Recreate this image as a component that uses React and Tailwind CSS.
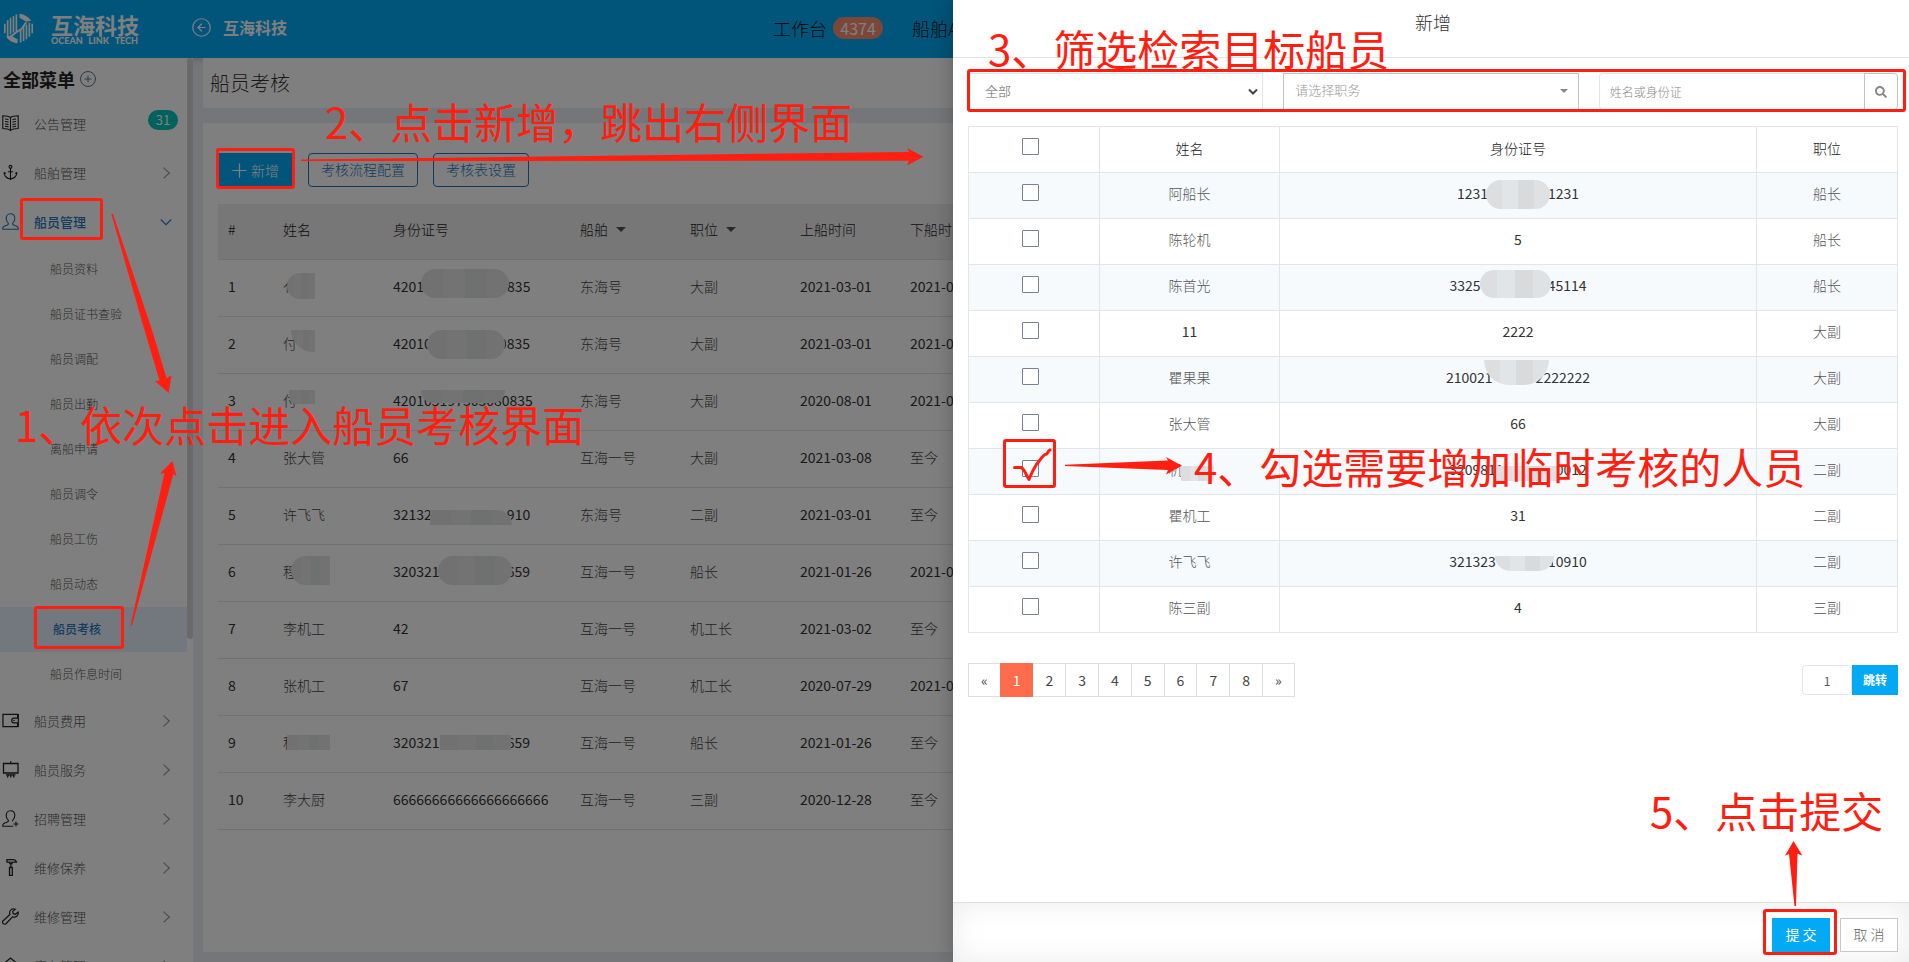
import { Fragment } from "react";
import { Anchor, CircleArrowLeft, CirclePlus, Plus } from "lucide-react";
import { FaSearch } from "react-icons/fa";

const SIDE_ITEMS = [
  { label: "公告管理", icon: "book", badge: "31" },
  { label: "船舶管理", icon: "anchor" },
  { label: "船员管理", icon: "user", open: true },
  { label: "船员费用", icon: "wallet" },
  { label: "船员服务", icon: "board" },
  { label: "招聘管理", icon: "userPlus" },
  { label: "维修保养", icon: "hammer" },
  { label: "维修管理", icon: "wrench" },
  { label: "库存管理", icon: "home" },
];

const SUB_ITEMS = [
  "船员资料",
  "船员证书查验",
  "船员调配",
  "船员出勤",
  "离船申请",
  "船员调令",
  "船员工伤",
  "船员动态",
  "船员考核",
  "船员作息时间",
];

// A value is either plain text or { before, gap, after, mask } where the middle is pixelated.
const ROWS = [
  [
    { before: "亻", mask: "left-[4px] top-[-4px] w-[28px] h-[26px] rounded-l-full" },
    { before: "4201", gap: "w-[83px]", after: "835", mask: "left-[28px] top-[-8px] w-[88px] h-[29px] rounded-full" },
    "东海号", "大副", "2021-03-01", "2021-03-31",
  ],
  [
    { before: "付", mask: "left-[8px] top-[-4px] w-[24px] h-[22px] rounded-bl-full" },
    { before: "42010", gap: "w-[67px]", after: "0835", mask: "left-[34px] top-[-4px] w-[78px] h-[29px] rounded-full" },
    "东海号", "大副", "2021-03-01", "2021-03-31",
  ],
  [
    { before: "付", mask: "left-[6px] top-[-1px] w-[26px] h-[14px] rounded-bl-lg" },
    { before: "420105197303080835", mask: "left-[28px] top-[-1px] w-[84px] h-[13px] rounded-b-xl" },
    "东海号", "大副", "2020-08-01", "2021-03-31",
  ],
  ["张大管", "66", "互海一号", "大副", "2021-03-08", "至今"],
  [
    "许飞飞",
    { before: "32132", gap: "w-[75px]", after: "910", mask: "left-[37px] top-[5px] w-[82px] h-[15px] rounded-tr-full" },
    "东海号", "二副", "2021-03-01", "至今",
  ],
  [
    { before: "程", mask: "left-[8px] top-[-6px] w-[39px] h-[29px] rounded-l-full" },
    { before: "320321", gap: "w-[67px]", after: "659", mask: "left-[45px] top-[-6px] w-[74px] h-[29px] rounded-full" },
    "互海一号", "船长", "2021-01-26", "2021-03-31",
  ],
  ["李机工", "42", "互海一号", "机工长", "2021-03-02", "至今"],
  ["张机工", "67", "互海一号", "机工长", "2020-07-29", "2021-03-31"],
  [
    { before: "程", mask: "left-[4px] top-[2px] w-[43px] h-[15px]" },
    { before: "320321", gap: "w-[67px]", after: "659", mask: "left-[47px] top-[2px] w-[71px] h-[15px]" },
    "互海一号", "船长", "2021-01-26", "至今",
  ],
  ["李大厨", "66666666666666666666", "互海一号", "三副", "2020-12-28", "至今"],
];

const CANDIDATES = [
  ["阿船长", { before: "1231", gap: "w-[60px]", after: "1231", mask: "left-[29px] top-[-4px] w-[64px] h-[29px] rounded-full" }, "船长"],
  ["陈轮机", "5", "船长"],
  ["陈首光", { before: "3325", gap: "w-[67px]", after: "45114", mask: "left-[30px] top-[-6px] w-[71px] h-[28px] rounded-full" }, "船长"],
  ["11", "2222", "大副"],
  ["瞿果果", { before: "210021", gap: "w-[43px]", after: "2222222", mask: "left-[38px] top-[-8px] w-[65px] h-[25px] rounded-b-full" }, "大副"],
  ["张大管", "66", "大副"],
  [
    { before: "机", gap: "w-[28px]", after: "", mask: "left-[13px] top-[6px] w-[33px] h-[15px]" },
    { before: "3209811", gap: "w-[52px]", after: "0012", mask: "left-[48px] top-[6px] w-[60px] h-[15px]" },
    "二副",
  ],
  ["瞿机工", "31", "二副"],
  ["许飞飞", { before: "321323", gap: "w-[52px]", after: "10910", mask: "left-[46px] top-[4px] w-[59px] h-[15px] rounded-b-full" }, "二副"],
  ["陈三副", "4", "三副"],
];

const DIGITS = "font-normal text-[#333]";

function Masked({ value, tone }) {
  if (typeof value === "string") {
    return <span className={/^[\d-]+$/.test(value) ? DIGITS : ""}>{value}</span>;
  }
  const ascii = /^\d/.test(value.before);
  return (
    <span className={"relative inline-flex align-top leading-5 " + (ascii ? DIGITS : "")}>
      {value.before}
      {value.gap && <span className={value.gap} />}
      {value.after}
      <span className={"absolute mt-px flex overflow-hidden " + value.mask}>
        {tone.map((shade, i) => (
          <span key={i} className={"flex-1 " + shade} />
        ))}
      </span>
    </span>
  );
}

function SideIcon({ name }) {
  const common = {
    viewBox: "0 0 17 17",
    className: "size-[17px] shrink-0",
    fill: "none",
    stroke: "currentColor",
    strokeWidth: 1.1,
    "aria-hidden": true,
  };
  switch (name) {
    case "book":
      return (
        <svg {...common}>
          <path d="M8.5 2.5C6.500 1 3 .8.8.8V13.500c3 0 5.700.300 7.700 2 2-1.700 4.700-2 7.700-2V.8C14 .8 10.500 1 8.500 2.500ZM8.500 2.500v13M3 4c1.300 0 2.500.200 3.500.700M3 6.500c1.300 0 2.500.200 3.500.700M3 9c1.300 0 2.500.200 3.500.700M3 11.300c1.300 0 2.500.200 3.500.700M14 4c-1.300 0-2.500.200-3.500.700M14 6.500c-1.300 0-2.500.200-3.500.700M14 9c-1.300 0-2.500.200-3.500.700M14 11.300c-1.300 0-2.500.200-3.500.700" />
        </svg>
      );
    case "anchor":
      return <Anchor className="size-[17px] shrink-0" strokeWidth={1.6} aria-hidden />;
    case "user":
      return (
        <svg {...common}>
          <path d="M8.500.700c-2.700 0-4.300 2-4.300 4.800 0 2 .8 3.500 2 4.600.500.500.3 1.300-.4 1.600L1.800 13.500C.9 14 .7 14.800.7 16.300h15.600c0-1.500-.2-2.300-1.100-2.800l-4-1.800c-.7-.3-.9-1.100-.4-1.600 1.200-1.100 2-2.600 2-4.600C12.800 2.700 11.200.700 8.500.700Z" />
        </svg>
      );
    case "userPlus":
      return (
        <svg {...common}>
          <path d="M8.500.700c-2.700 0-4.300 2-4.300 4.800 0 2 .8 3.500 2 4.600.500.500.3 1.300-.4 1.600L1.800 13.500C.9 14 .7 14.800.7 16.300h10.500M8.500.700c2.700 0 4.300 2 4.300 4.800 0 2-.8 3.500-2 4.600-.3.400-.2.900.2 1.200M14 11.500v5M11.500 14h5" />
        </svg>
      );
    case "wallet":
      return (
        <svg {...common} viewBox="0 0 18 17" strokeWidth={1.300}>
          <path d="M16.500 6V2H1v13h15.500v-4M17.300 6h-4.500a2.500 2.500 0 0 0 0 5h4.500ZM12 8.500h1.500M17.300 1.500V6M17.300 11v4.500" />
        </svg>
      );
    case "board":
      return (
        <svg {...common} strokeWidth={1.300}>
          <path d="M1.500 2.500h14.500v9.500h-14.500ZM8.700.300v2.200M4 13.800h9.500M6.500 13.800 5.300 16.500M8.700 13.800v2.700M11 13.800l1.200 2.700" />
        </svg>
      );
    case "hammer":
      return (
        <svg {...common} strokeWidth={1.300}>
          <path d="M5 .7h6.500c1.500 0 2.500 1 3 2.500h-3.500H10v1.300H7.800V3.200H5ZM8.900 4.500v4M7.500 8.500h2.800v7.800H7.500Z" />
        </svg>
      );
    case "wrench":
      return (
        <svg {...common} strokeWidth={1.200}>
          <path d="M13.300 1.200C11.500.500 9.300 1 8.300 2.500c-.9 1.300-.8 2.700-.4 4L1.200 12.700c-1 1-.7 2.300 0 3s2 .8 3-.2l6.300-6.600c1.300.5 3 .4 4.200-.6 1.300-1.100 1.900-2.700 1.400-4.300l-2.600 2.300-2.300-.6-.5-2.300Z" />
        </svg>
      );
    default:
      return (
        <svg {...common} strokeWidth={1.300}>
          <path d="M.8 7.500 8.500 1l7.700 6.500M3 6v10h11V6" />
        </svg>
      );
  }
}

function Chevron({ open }) {
  return (
    <svg viewBox="0 0 12 12" className="size-3 shrink-0" fill="none" stroke="currentColor" strokeWidth="1.200" aria-hidden>
      <path d={open ? "M.8 3.500 6 8.700l5.200-5.200" : "M3.500.6 9.300 6 3.500 11.400"} />
    </svg>
  );
}

function Logo() {
  return (
    <svg viewBox="0 0 32 32" className="size-[31px] shrink-0" aria-hidden>
      <g fill="none" stroke="#fff" strokeWidth="1.700">
        <path d="M1.800 21V11M4.800 24.500V7.500M7.800 22V4.800M10.800 20V3M13.800 18.500V1.500" />
        <path d="M30.200 11v10M27.200 10v14.500M24.200 12v15.200M21.200 14v15M18.200 17v13.500" />
        <path d="M8 24.500 13.500 20 19 16.500 24 9.500" strokeWidth="2" />
      </g>
      <path d="M17 .8c5 .500 9.500 3 12 7.200l-5 1-7-4Z" fill="#fff" />
      <path d="M15 31.200c-5-.500-9.500-3-11.500-7l4.500-1 7 4Z" fill="#fff" />
    </svg>
  );
}

function Header() {
  return (
    <header className="flex h-[58px] shrink-0 items-center bg-[#03a9f4] text-white shadow-md">
      <div className="flex w-[191px] items-center gap-[17px] pb-0.5 pl-[3px]">
        <Logo />
        <div className="flex w-[87px] flex-col">
          <span className="text-[22px] leading-6 font-bold whitespace-nowrap">互海科技</span>
          <span className="flex justify-between font-[Lato,sans-serif] text-[9px] leading-[9px] font-black">
            <span>OCEAN</span> <span>LINK</span> <span>TECH</span>
          </span>
        </div>
      </div>
      <a href="#back" className="flex items-center gap-[11px] pb-1 text-base font-bold">
        <CircleArrowLeft className="size-[21px]" strokeWidth={1.400} aria-hidden />
        互海科技
      </a>
      <nav className="ml-[486px] flex items-center gap-[29px] pb-0.5 text-lg whitespace-nowrap text-[#111]">
        <a href="#workbench" className="flex items-center gap-1.5">
          工作台
          <span className="flex h-[22px] w-[50px] items-center justify-center rounded-full bg-[#f98d72] text-base font-normal text-white">4374</span>
        </a>
        <a href="#ais">船舶AIS</a>
      </nav>
    </header>
  );
}

function Sidebar() {
  return (
    <aside className="flex w-[193px] shrink-0 overflow-hidden bg-white">
      <div className="min-w-0 flex-1">
        <div className="flex h-[42px] items-center gap-1 pl-[3px] text-lg font-bold text-[#222]">
          全部菜单
          <CirclePlus className="size-[18px] text-[#5b7088]" strokeWidth={1.300} aria-hidden />
        </div>
        <nav>
          {SIDE_ITEMS.map((item) => (
            <Fragment key={item.label}>
              <a
                href="#menu"
                className={
                  "flex h-[49px] items-center pr-[15px] pb-0.5 pl-0.5 text-[13px] " +
                  (item.open ? "font-medium text-[#2378bd]" : "text-[#555]")
                }
              >
                <span className={item.open ? "" : "text-[#222]"}>
                  <SideIcon name={item.icon} />
                </span>
                <span className="ml-[15px] flex-1">{item.label}</span>
                {item.badge ? (
                  <span className="-mr-1.5 mb-2 flex h-5 w-[30px] items-center justify-center rounded-full bg-[#00c4b8] text-[13px] font-normal text-white">
                    {item.badge}
                  </span>
                ) : (
                  <span className={item.open ? "" : "text-[#999]"}>
                    <Chevron open={item.open} />
                  </span>
                )}
              </a>
              {item.open &&
                SUB_ITEMS.map((sub) => (
                  <a
                    key={sub}
                    href="#submenu"
                    className={
                      "flex h-[45px] items-center pb-0.5 text-xs " +
                      (sub === "船员考核" ? "bg-[#e6f0ff] pl-[53px] font-medium text-[#2378bd]" : "pl-[50px] text-[#555]")
                    }
                  >
                    {sub}
                  </a>
                ))}
            </Fragment>
          ))}
        </nav>
      </div>
      <div className="h-[581px] w-1.5 rounded-full bg-[#d4d4d4]" />
    </aside>
  );
}

function SortHead({ children }) {
  return (
    <span className="flex items-center gap-2">
      {children}
      <span className="border-x-[5px] border-t-[5px] border-x-transparent border-t-[#555]" />
    </span>
  );
}

const PAGE_TONE = ["bg-[#e2e2e2]", "bg-[#e6e7e8]", "bg-[#dfe0e0]", "bg-[#e4e4e4]"];

function MainPage() {
  return (
    <main className="flex min-w-0 flex-1 flex-col gap-[15px] pr-[15px] pb-2.5 pl-2.5">
      <h1 className="flex h-[50px] shrink-0 items-center bg-white pl-[7px] text-xl text-[#333]">船员考核</h1>
      <section className="flex-1 bg-white px-[15px] pt-[30px]">
        <div className="flex gap-[15px] text-sm">
          <button type="button" className="flex h-[34px] w-[75px] items-center justify-center bg-[#03a9f4] pr-1 text-white">
            <Plus className="size-[23px]" strokeWidth={1.300} aria-hidden />
            新增
          </button>
          <button type="button" className="h-[34px] rounded-sm border border-[#2378bd] px-3 pb-0.5 text-[#2378bd]">考核流程配置</button>
          <button type="button" className="h-[34px] rounded-sm border border-[#2378bd] px-3 pb-0.5 text-[#2378bd]">考核表设置</button>
        </div>
        <table className="mt-[17px] w-full table-fixed text-left text-sm text-[#444] [&_td]:pb-[3px] [&_th]:pb-1">
          <thead>
            <tr className="h-[55px] border-b border-[#e0e0e0] bg-[#eee] text-[#222] [&>th]:px-2.5 [&>th]:font-light">
              <th className="w-[55px]">#</th>
              <th className="w-[110px]">姓名</th>
              <th className="w-[187px]">身份证号</th>
              <th className="w-[110px]"><SortHead>船舶</SortHead></th>
              <th className="w-[110px]"><SortHead>职位</SortHead></th>
              <th className="w-[110px]">上船时间</th>
              <th>下船时间</th>
            </tr>
          </thead>
          <tbody>
            {ROWS.map((row, i) => (
              <tr key={i} className="h-[57px] border-b border-[#e4e4e4] [&>td]:px-2.5">
                <td className={DIGITS}>{i + 1}</td>
                {row.map((cell, j) => (
                  <td key={j}>
                    <Masked value={cell} tone={PAGE_TONE} />
                  </td>
                ))}
              </tr>
            ))}
          </tbody>
        </table>
      </section>
    </main>
  );
}

function Filters() {
  return (
    <div className="grid h-[37px] grid-cols-[295fr_295fr_299fr] gap-5 text-[13px]">
      <div className="relative">
        <select aria-label="船舶" className="h-full w-full appearance-none border border-[#e4e7ea] bg-white pb-0.5 pl-4 text-[#666]">
          <option>全部</option>
        </select>
        <svg viewBox="0 0 10 6" className="pointer-events-none absolute top-4 right-[5px] h-1.5 w-2.5" fill="none" stroke="#444" strokeWidth="2" aria-hidden>
          <path d="M1 .5 5 4.500 9 .5" />
        </svg>
      </div>
      <div className="relative">
        <select aria-label="职务" className="h-full w-full appearance-none border border-[#c0c4c8] bg-white pb-1 pl-[11px] text-[#999]">
          <option>请选择职务</option>
        </select>
        <span className="pointer-events-none absolute top-4 right-[11px] border-x-4 border-t-4 border-x-transparent border-t-[#888]" />
      </div>
      <div className="flex">
        <input
          type="text"
          aria-label="姓名或身份证"
          placeholder="姓名或身份证"
          className="min-w-0 flex-1 rounded-l-sm border border-r-0 border-[#e4e7ea] pl-2.5 text-xs placeholder:text-[#888]"
        />
        <button type="button" aria-label="搜索" className="flex w-[34px] items-center justify-center rounded-r-sm border border-[#c0c4c8] text-[#888]">
          <FaSearch className="size-3" aria-hidden />
        </button>
      </div>
    </div>
  );
}

const CHECKBOX = "mr-[7px] block size-[17px] appearance-none rounded-[1px] border border-[#768293] bg-white";
const DRAWER_TONE = ["bg-[#dcdee0]", "bg-[#e2e5e7]", "bg-[#d8dadb]", "bg-[#dfe2e4]"];

function Drawer() {
  return (
    <aside className="absolute inset-y-0 right-0 flex w-[50.08%] flex-col bg-white shadow-[0_0_20px_rgba(0,0,0,0.25)]">
      <h2 className="flex h-[58px] shrink-0 items-center justify-center border-b border-[#e5e5e5] pb-3.5 pl-1 text-lg text-[#333]">新增</h2>
      <div className="flex-1 pt-[15px] pr-[11px] pl-[15px]">
        <Filters />
        <table className="mt-4 w-full table-fixed border-collapse text-center text-sm text-[#555] [&_td]:border [&_td]:border-[#e1e6eb] [&_td]:pb-1.5 [&_th]:border [&_th]:border-[#e1e6eb] [&_th]:pb-1 [&_th]:font-light">
          <thead>
            <tr className="h-[46px] text-[#222]">
              <th className="w-[131px]">
                <label className="flex justify-center pb-[3px]">
                  <input type="checkbox" aria-label="全选" className={CHECKBOX} />
                </label>
              </th>
              <th className="w-[180px]">姓名</th>
              <th>身份证号</th>
              <th className="w-[141px]">职位</th>
            </tr>
          </thead>
          <tbody>
            {CANDIDATES.map((row, i) => (
              <tr key={i} className="h-[46px] odd:bg-[#f6fafd]">
                <td>
                  <label className="flex justify-center pb-px">
                    <input type="checkbox" aria-label={"选择第" + (i + 1) + "行"} className={CHECKBOX} />
                  </label>
                </td>
                {row.map((cell, j) => (
                  <td key={j}>
                    <Masked value={cell} tone={DRAWER_TONE} />
                  </td>
                ))}
              </tr>
            ))}
          </tbody>
        </table>
        <div className="mt-[30px] flex items-center justify-between">
          <nav aria-label="分页" className="flex pl-px text-sm font-normal">
            {["«", "1", "2", "3", "4", "5", "6", "7", "8", "»"].map((p) => (
              <a
                key={p}
                href="#page"
                className={
                  "-ml-px flex h-[34px] items-center border px-3 pb-px " +
                  (p === "1" ? "z-10 border-[#ff6c4c] bg-[#ff6c4c] text-white" : "border-[#ddd] text-[#444]")
                }
              >
                {p}
              </a>
            ))}
          </nav>
          <div className="flex text-xs">
            <input
              type="text"
              aria-label="页码"
              defaultValue="1"
              className="h-[30px] w-[50px] rounded-sm border border-[#e1e6eb] text-center font-normal text-[#555]"
            />
            <button type="button" className="h-[30px] w-[46px] bg-[#03a9f4] font-bold text-white">跳转</button>
          </div>
        </div>
      </div>
      <footer className="flex h-[60px] shrink-0 items-start justify-end gap-2.5 border-t border-[#e0e0e0] pt-[15px] pr-[11px] text-sm shadow-[inset_0_0_30px_rgba(0,0,0,0.08)]">
        <button type="button" className="h-[34px] w-[58px] bg-[#03a9f4] pb-0.5 font-normal text-white">提 交</button>
        <button type="button" className="h-[34px] w-[58px] border border-[#c5c9cd] bg-white pb-0.5 text-[#666]">取 消</button>
      </footer>
    </aside>
  );
}

const NOTE = "absolute text-[42px] leading-[42px] font-normal whitespace-nowrap";

function Annotations() {
  return (
    <div className="pointer-events-none absolute inset-0 overflow-hidden text-[#ff1e10]">
      <p className={NOTE + " top-[403px] left-[15px]"}>1、依次点击进入船员考核界面</p>
      <p className={NOTE + " top-[100px] left-[325px]"}>2、点击新增，跳出右侧界面</p>
      <p className={NOTE + " top-[27px] left-[988px]"}>3、筛选检索目标船员</p>
      <p className={NOTE + " top-[445px] left-[1194px]"}>4、勾选需要增加临时考核的人员</p>
      <p className={NOTE + " top-[789px] left-[1650px]"}>5、点击提交</p>
      <svg className="absolute inset-0 size-full" aria-hidden>
        <g fill="none" stroke="currentColor" strokeWidth="3">
          <rect x="21.500" y="199.500" width="80" height="39" rx="1.500" />
          <rect x="217.500" y="149.500" width="76" height="38" rx="1.500" />
          <rect x="35.500" y="607.500" width="87" height="40" rx="1.500" />
          <rect x="968.500" y="70.500" width="936" height="40" rx="1.500" />
          <rect x="1004.500" y="440.500" width="50" height="46" rx="1.500" />
          <rect x="1764.500" y="910.500" width="71" height="43" rx="1.500" />
          <path d="M1014.500 467.500H1021.500C1025 470 1026 475 1029 479.500 1031 474 1033.500 469 1037 463.500 1040 461 1042 456 1045 454.500 1048.500 454.500 1047 451 1050 450" strokeLinecap="round" strokeLinejoin="round" />
        </g>
        <g fill="currentColor">
          <path d="M111.300 214H113L152 330 166.500 378 171.500 375.500 168.700 393 155 381 159.500 380.500 144.500 330Z" />
          <path d="M130.500 625.500H132L173.500 473.500 176.500 476.500 172.500 461 160 473.500 164.500 473Z" />
          <path d="M301 159.500V161L909 160.800 907 165.500 923.500 156.700 907 148 909 152Z" />
          <path d="M1065 464.700V466L1168 470 1166 474.500 1182 465.700 1166 457 1168 460.500Z" />
          <path d="M1794.500 906H1796L1797.500 853.500 1802.500 855.700 1793.500 841 1785 855.700 1789 854Z" />
        </g>
      </svg>
    </div>
  );
}

export default function App() {
  return (
    <div className="relative flex h-screen flex-col overflow-hidden bg-[#e8ecf2] font-['Noto_Sans_CJK_SC',sans-serif] font-light">
      <Header />
      <div className="flex min-h-0 flex-1">
        <Sidebar />
        <MainPage />
      </div>
      <div className="absolute inset-0 bg-black/50" />
      <Drawer />
      <Annotations />
    </div>
  );
}
